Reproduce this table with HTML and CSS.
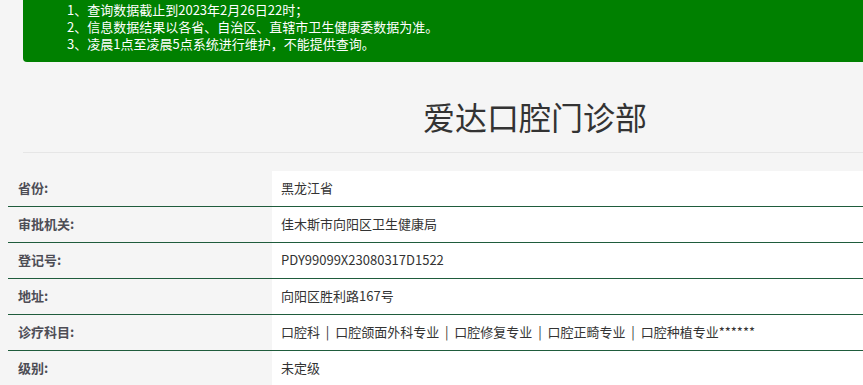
FILE: index.html
```html
<!DOCTYPE html>
<html lang="zh-CN">
<head>
<meta charset="utf-8">
<title>爱达口腔门诊部</title>
<link rel="stylesheet" href="styles.css">
</head>
<body>
<div class="notice">
  <p>1、查询数据截止到2023年2月26日22时；</p>
  <p>2、信息数据结果以各省、自治区、直辖市卫生健康委数据为准。</p>
  <p>3、凌晨1点至凌晨5点系统进行维护，不能提供查询。</p>
</div>
<div class="title-wrap">
  <h1 class="title">爱达口腔门诊部</h1>
</div>
<div class="info">
  <div class="row"><div class="label">省份:</div><div class="value">黑龙江省</div></div>
  <div class="row"><div class="label">审批机关:</div><div class="value">佳木斯市向阳区卫生健康局</div></div>
  <div class="row"><div class="label">登记号:</div><div class="value">PDY99099X23080317D1522</div></div>
  <div class="row"><div class="label">地址:</div><div class="value">向阳区胜利路167号</div></div>
  <div class="row"><div class="label">诊疗科目:</div><div class="value">口腔科 &nbsp;|&nbsp; 口腔颌面外科专业 &nbsp;|&nbsp; 口腔修复专业 &nbsp;|&nbsp; 口腔正畸专业 &nbsp;|&nbsp; 口腔种植专业******</div></div>
  <div class="row"><div class="label">级别:</div><div class="value">未定级</div></div>
</div>
</body>
</html>
```
FILE: styles.css
```css
html, body {
  margin: 0;
  padding: 0;
  overflow: hidden;
}
body {
  background: #f5f5f5;
  font-family: "Noto Sans CJK SC", "Noto Sans", sans-serif;
  color: #333;
}
.notice {
  margin-left: 23px;
  background: #008000;
  color: #fff;
  border-bottom-left-radius: 4px;
  padding: 1px 0 10px 44px;
  font-size: 13px;
  line-height: 17px;
}
.notice p {
  margin: 0;
  white-space: nowrap;
}
.title-wrap {
  margin-left: 23px;
  width: 1024px;
  text-align: center;
  border-bottom: 1px solid #e6e6e6;
  padding: 32px 0 14px;
}
.title {
  margin: 0;
  font-size: 32px;
  line-height: 44px;
  font-weight: 400;
  color: #333;
}
.info {
  margin: 18px 0 0 8px;
}
.row {
  display: grid;
  grid-template-columns: 264px 1fr;
  border-bottom: 1px solid #1f5c3c;
}
.label, .value {
  height: 35px;
  box-sizing: border-box;
  padding-bottom: 3px;
  display: flex;
  align-items: center;
  font-size: 13px;
  white-space: nowrap;
}
.label {
  padding-left: 10px;
  font-weight: 700;
  color: #4d4d55;
}
.value {
  background: #fff;
  padding-left: 9px;
  color: #333;
}
```
